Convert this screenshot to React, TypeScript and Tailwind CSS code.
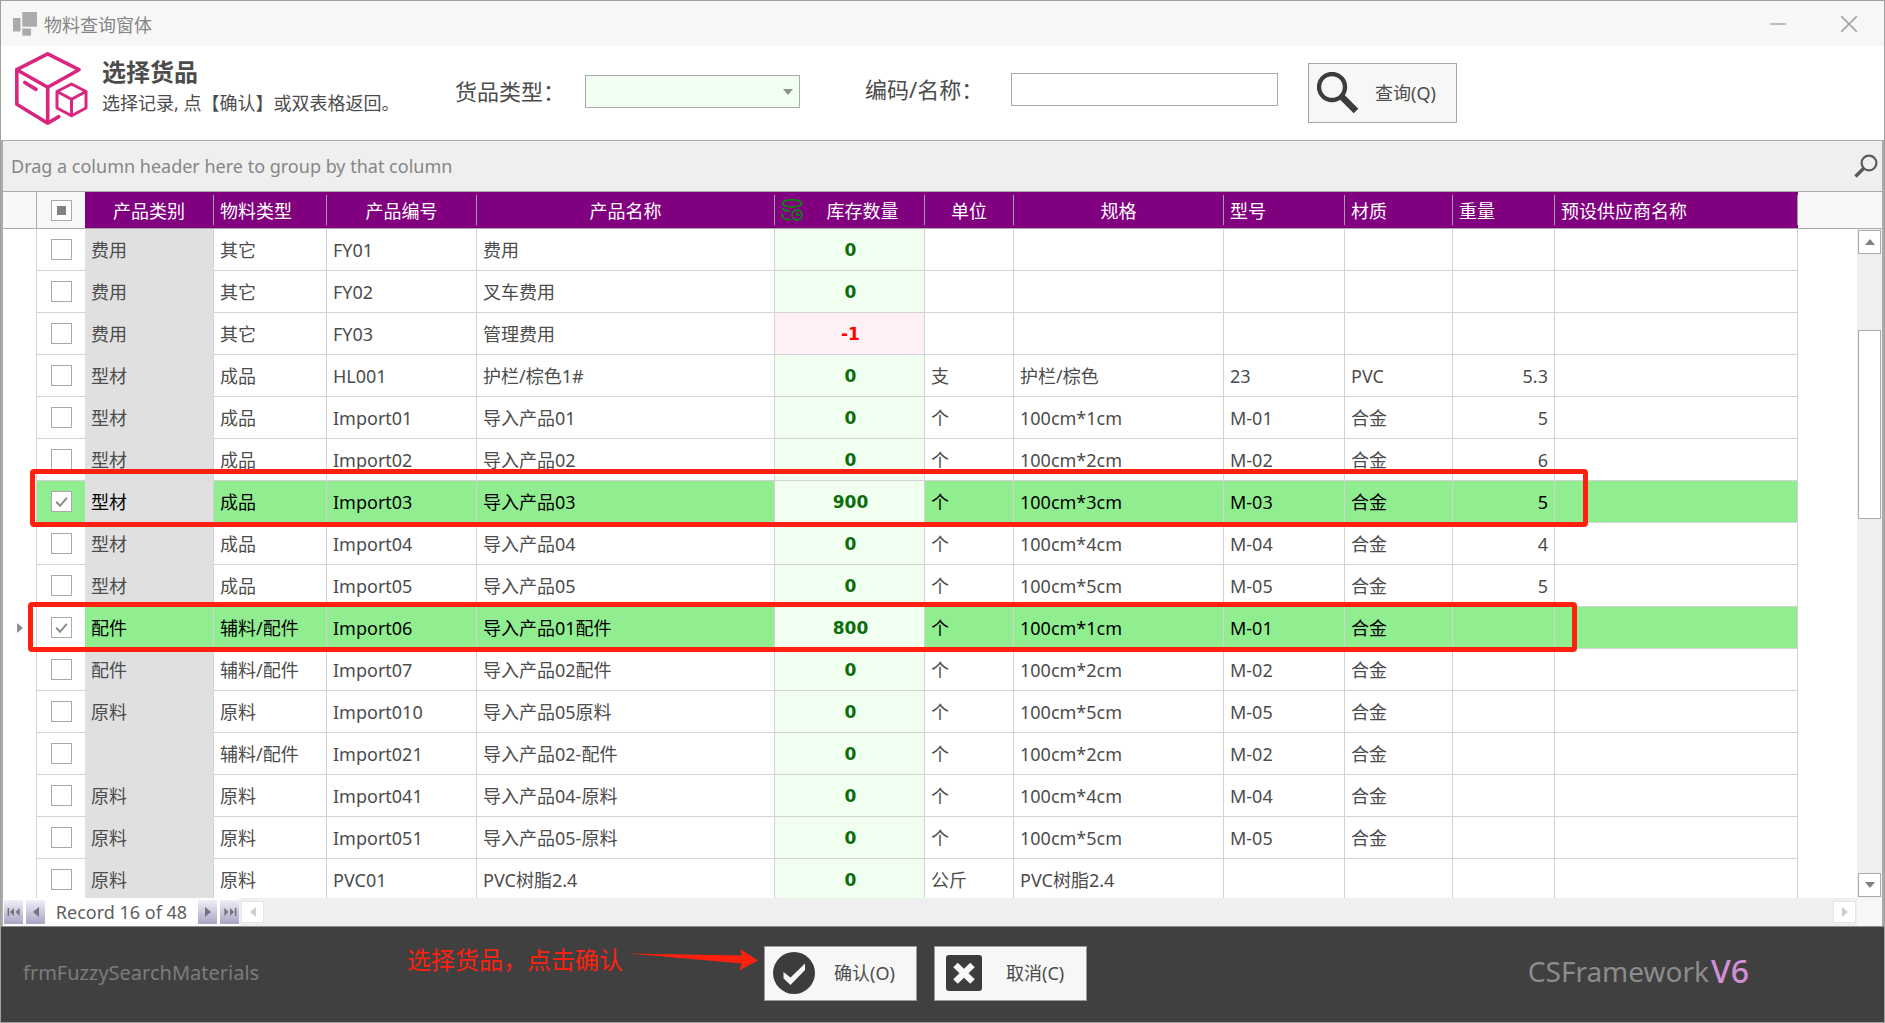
import { useState } from 'react';
import clsx from 'clsx';

interface Material {
  category: string;
  type: string;
  code: string;
  name: string;
  stock: number;
  unit?: string;
  spec?: string;
  model?: string;
  material?: string;
  weight?: string;
}

const materials: Material[] = [
  { category: '费用', type: '其它', code: 'FY01', name: '费用', stock: 0 },
  { category: '费用', type: '其它', code: 'FY02', name: '叉车费用', stock: 0 },
  { category: '费用', type: '其它', code: 'FY03', name: '管理费用', stock: -1 },
  { category: '型材', type: '成品', code: 'HL001', name: '护栏/棕色1#', stock: 0, unit: '支', spec: '护栏/棕色', model: '23', material: 'PVC', weight: '5.3' },
  { category: '型材', type: '成品', code: 'Import01', name: '导入产品01', stock: 0, unit: '个', spec: '100cm*1cm', model: 'M-01', material: '合金', weight: '5' },
  { category: '型材', type: '成品', code: 'Import02', name: '导入产品02', stock: 0, unit: '个', spec: '100cm*2cm', model: 'M-02', material: '合金', weight: '6' },
  { category: '型材', type: '成品', code: 'Import03', name: '导入产品03', stock: 900, unit: '个', spec: '100cm*3cm', model: 'M-03', material: '合金', weight: '5' },
  { category: '型材', type: '成品', code: 'Import04', name: '导入产品04', stock: 0, unit: '个', spec: '100cm*4cm', model: 'M-04', material: '合金', weight: '4' },
  { category: '型材', type: '成品', code: 'Import05', name: '导入产品05', stock: 0, unit: '个', spec: '100cm*5cm', model: 'M-05', material: '合金', weight: '5' },
  { category: '配件', type: '辅料/配件', code: 'Import06', name: '导入产品01配件', stock: 800, unit: '个', spec: '100cm*1cm', model: 'M-01', material: '合金' },
  { category: '配件', type: '辅料/配件', code: 'Import07', name: '导入产品02配件', stock: 0, unit: '个', spec: '100cm*2cm', model: 'M-02', material: '合金' },
  { category: '原料', type: '原料', code: 'Import010', name: '导入产品05原料', stock: 0, unit: '个', spec: '100cm*5cm', model: 'M-05', material: '合金' },
  { category: '', type: '辅料/配件', code: 'Import021', name: '导入产品02-配件', stock: 0, unit: '个', spec: '100cm*2cm', model: 'M-02', material: '合金' },
  { category: '原料', type: '原料', code: 'Import041', name: '导入产品04-原料', stock: 0, unit: '个', spec: '100cm*4cm', model: 'M-04', material: '合金' },
  { category: '原料', type: '原料', code: 'Import051', name: '导入产品05-原料', stock: 0, unit: '个', spec: '100cm*5cm', model: 'M-05', material: '合金' },
  { category: '原料', type: '原料', code: 'PVC01', name: 'PVC树脂2.4', stock: 0, unit: '公斤', spec: 'PVC树脂2.4' },
];

const columns = [
  { title: '产品类别', width: 'w-[129px]', center: true },
  { title: '物料类型', width: 'w-[113px]', center: false },
  { title: '产品编号', width: 'w-[150px]', center: true },
  { title: '产品名称', width: 'w-[298px]', center: true },
  { title: '库存数量', width: 'w-[150px]', center: true },
  { title: '单位', width: 'w-[89px]', center: true },
  { title: '规格', width: 'w-[210px]', center: true },
  { title: '型号', width: 'w-[121px]', center: false },
  { title: '材质', width: 'w-[108px]', center: false },
  { title: '重量', width: 'w-[102px]', center: false },
  { title: '预设供应商名称', width: 'w-[243px]', center: false },
];

function WindowIcon() {
  return (
    <svg className="h-6 w-6" viewBox="0 0 24 24" fill="#ababab">
      <rect x="0" y="6" width="7.5" height="13.5" />
      <rect x="9.3" y="0" width="14.7" height="14.7" />
      <rect x="9.3" y="16.5" width="8.7" height="7.2" />
    </svg>
  );
}

function BoxesIcon() {
  return (
    <svg className="h-[74px] w-[74px]" viewBox="0 0 74 74" fill="none" stroke="#d9267f" strokeLinecap="round" strokeLinejoin="round">
      <g strokeWidth="3.6">
        <path d="M1.8 17.7 32.7 1.8 64 17.7 32.7 35.2Z" />
        <path d="M1.8 17.7V52.3L32.7 71.3 43.8 64.6M32.7 35.2V71.3" />
        <path d="M9.8 30.5 21 37.4" />
      </g>
      <path d="M56.5 32 71 39.5V56L56.5 63.8 42 56V39.5ZM42 39.5 56.5 47.3 71 39.5M56.5 47.3V63.8" strokeWidth="3" />
    </svg>
  );
}

function StockIcon() {
  return (
    <svg className="h-[22px] w-[22px]" viewBox="0 0 22 22" fill="none" stroke="#128012" strokeWidth="1.8">
      <ellipse cx="11" cy="4.4" rx="9.6" ry="3.6" />
      <path d="M1.2 9.2c.8 2 3.6 3 8 3M1.2 14.6v2.2c.4 2.4 4 4 8.6 4.1" />
      <circle cx="16" cy="16" r="5" />
      <path d="M16 12.8v3.4h3" />
    </svg>
  );
}

function Arrow({ direction, className }: { direction: 'up' | 'down' | 'left' | 'right'; className?: string }) {
  const paths = {
    up: 'M0 8 5 2l5 6Z',
    down: 'M0 2 5 8l5-6Z',
    left: 'M8 0 2 5l6 5Z',
    right: 'M2 0 8 5l-6 5Z',
  };
  return (
    <svg className={clsx('h-[10px] w-[10px]', className)} viewBox="0 0 10 10" fill="currentColor">
      <path d={paths[direction]} />
    </svg>
  );
}

function Tick({ checked, onChange, label }: { checked: boolean; onChange: () => void; label: string }) {
  return (
    <span className="mx-auto grid h-[21px] w-[21px]">
      <input
        type="checkbox"
        aria-label={label}
        checked={checked}
        onChange={onChange}
        className="col-start-1 row-start-1 h-[21px] w-[21px] appearance-none border border-[#a9a9a9] bg-white"
      />
      {checked && (
        <svg className="pointer-events-none col-start-1 row-start-1 h-[21px] w-[21px]" viewBox="0 0 21 21" fill="none" stroke="#8c8c8c" strokeWidth="2">
          <path d="m5.2 10.8 3.8 4 6.8-8" />
        </svg>
      )}
    </span>
  );
}

function NavButton({ label, children }: { label: string; children: React.ReactNode }) {
  return (
    <button aria-label={label} className="flex h-6 w-[19px] items-center justify-center bg-linear-to-b from-[#f0f0f6] to-[#a8a5c4] text-[#727280]">
      {children}
    </button>
  );
}

export default function App() {
  const [selected, setSelected] = useState<string[]>(['Import03', 'Import06']);
  const [keyword, setKeyword] = useState('');
  const focused = 'Import06';

  const toggle = (code: string) => {
    setSelected(selected.includes(code) ? selected.filter((c) => c !== code) : [...selected, code]);
  };

  return (
    <div className="flex h-screen flex-col overflow-hidden border border-[#a0a0a0] bg-white font-['Noto_Sans','Noto_Sans_CJK_SC',sans-serif] text-[18px] leading-6 text-[#4c4c4c]">
      <header className="flex h-[45px] shrink-0 items-center bg-[#f7f7f7] pl-3 text-[#858585]">
        <WindowIcon />
        <h1 className="ml-[7px] flex-1 pt-[2px]">物料查询窗体</h1>
        <button aria-label="最小化" className="flex h-full w-[72px] items-center justify-center">
          <svg className="h-4 w-4" viewBox="0 0 16 16" stroke="#a3a3a3" strokeWidth="1.4">
            <path d="M0 8h16" />
          </svg>
        </button>
        <button aria-label="关闭" className="flex h-full w-[70px] items-center justify-center">
          <svg className="h-4 w-4" viewBox="0 0 16 16" stroke="#a3a3a3" strokeWidth="1.6">
            <path d="m0 0 16 16M16 0 0 16" />
          </svg>
        </button>
      </header>

      <section className="flex h-[94px] shrink-0 items-center pl-[14px]">
        <div className="flex w-[440px] items-center pb-2">
          <BoxesIcon />
          <div className="ml-[13px] pb-1">
            <h2 className="text-[24px] leading-8 font-bold">选择货品</h2>
            <p className="leading-[30px]">选择记录, 点【确认】或双表格返回。</p>
          </div>
        </div>
        <div className="flex items-center pb-1">
          <label htmlFor="kind" className="w-[130px] text-[22px] leading-8">货品类型：</label>
          <div className="relative w-[215px]">
            <select id="kind" className="block h-[33px] w-full appearance-none border border-[#ababab] bg-[#f0fff0]">
              <option></option>
            </select>
            <Arrow direction="down" className="pointer-events-none absolute top-[12px] right-[7px] text-[#8a948a]" />
          </div>
        </div>
        <div className="flex items-center pb-2">
          <label htmlFor="keyword" className="ml-[65px] w-[146px] text-[22px] leading-8">编码/名称：</label>
          <input
            id="keyword"
            value={keyword}
            onChange={(e) => setKeyword(e.target.value)}
            className="h-[33px] w-[267px] border border-[#ababab] px-2"
          />
        </div>
        <button className="ml-[30px] flex h-[60px] w-[149px] items-center border border-[#a6a6a6] bg-[#f7f7f7] pl-2">
          <svg className="h-[42px] w-[42px]" viewBox="0 0 42 42" fill="none" stroke="#3c3c3c">
            <circle cx="15" cy="15" r="13" strokeWidth="4.4" />
            <path d="M24.5 24.5 39 39" strokeWidth="6.5" />
          </svg>
          <span className="ml-4">查询(Q)</span>
        </button>
      </section>

      <main className="flex min-h-0 flex-1 flex-col border-x-2 border-t border-[#ababab]">
        <div className="flex h-[50px] shrink-0 items-center justify-between bg-[#efefef] pr-1 pl-2 text-[#868686]">
          <span>Drag a column header here to group by that column</span>
          <button aria-label="查找">
            <svg className="h-6 w-6" viewBox="0 0 24 24" fill="none" stroke="#5a5a5a">
              <circle cx="15" cy="9" r="7.4" strokeWidth="2.2" />
              <path d="M10 14 1.5 22.5" strokeWidth="3.4" />
            </svg>
          </button>
        </div>

        <div className="relative min-h-0 flex-1 overflow-hidden border-t border-[#ababab]">
          <table className="w-full table-fixed border-separate border-spacing-0">
            <thead>
              <tr className="h-[37px] bg-[#f7f7f7]">
                <th className="w-[34px] border-r border-b border-[#ababab]"></th>
                <th className="w-[48px] border-b border-[#ababab] p-0">
                  <span className="mx-auto grid h-[21px] w-[21px] place-items-center">
                    <input
                      type="checkbox"
                      aria-label="全选"
                      className="col-start-1 row-start-1 h-[21px] w-[21px] appearance-none border border-[#a9a9a9] bg-white"
                    />
                    <span className="pointer-events-none col-start-1 row-start-1 h-[9px] w-[9px] bg-[#828282]"></span>
                  </span>
                </th>
                {columns.map((col) => (
                  <th key={col.title} className={clsx('border-b border-[#ababab] bg-[#800080] p-0 font-normal text-white', col.width)}>
                    <div className={clsx('flex h-[30px] items-center border-r border-[#a0a0a0] px-[6px]', col.center && 'justify-center')}>
                      {col.title === '库存数量' && <StockIcon />}
                      <span className={clsx('pt-[2px]', col.title === '库存数量' && 'flex-1 pl-1')}>{col.title}</span>
                    </div>
                  </th>
                ))}
                <th className="border-b border-[#ababab]"></th>
              </tr>
            </thead>
            <tbody>
              {materials.map((row) => {
                const checked = selected.includes(row.code);
                const isFocused = row.code === focused;
                const cell = clsx('truncate border-r border-b border-[#d3d3d3] p-0 px-[6px]', checked && 'bg-[#90ee90] text-black');
                return (
                  <tr key={row.code} className="h-[42px]">
                    <td className="border-r border-[#d3d3d3] p-0">
                      {isFocused && <Arrow direction="right" className="ml-3 text-[#8c8c8c]" />}
                    </td>
                    <td className={clsx('border-b border-[#d3d3d3] p-0', checked && !isFocused && 'bg-[#90ee90]')}>
                      <Tick checked={checked} onChange={() => toggle(row.code)} label={row.name} />
                    </td>
                    <td
                      className={clsx(
                        'border-r border-b border-r-[#d3d3d3] border-b-[#dcdcdc] p-0 px-[6px]',
                        isFocused ? 'bg-[#90ee90]' : 'bg-[#e0e0e0]',
                        checked && 'text-black',
                      )}
                    >
                      {row.category}
                    </td>
                    <td className={cell}>{row.type}</td>
                    <td className={cell}>{row.code}</td>
                    <td className={cell}>{row.name}</td>
                    <td
                      className={clsx(
                        "border-r border-b border-[#d3d3d3] p-0 pl-[2px] text-center font-['DejaVu_Sans',sans-serif] text-[17px] font-bold",
                        row.stock < 0 ? 'bg-[#fff0f5] text-[#ff0000]' : 'bg-[#f0fff0] text-[#0b6e0b]',
                      )}
                    >
                      {row.stock}
                    </td>
                    <td className={cell}>{row.unit}</td>
                    <td className={cell}>{row.spec}</td>
                    <td className={cell}>{row.model}</td>
                    <td className={cell}>{row.material}</td>
                    <td className={clsx(cell, 'text-right')}>{row.weight}</td>
                    <td className={cell}></td>
                    <td></td>
                  </tr>
                );
              })}
            </tbody>
          </table>

          {/* vertical scrollbar */}
          <div className="absolute top-[37px] right-0 bottom-0 flex w-[25px] flex-col items-center bg-[#efefef] py-[1px]">
            <button aria-label="向上" className="flex h-6 w-[23px] items-center justify-center border border-[#ababab] bg-white text-[#808080]">
              <Arrow direction="up" />
            </button>
            <div className="mt-[76px] h-[189px] w-[23px] border border-[#ababab] bg-white"></div>
            <button aria-label="向下" className="mt-auto flex h-6 w-[23px] items-center justify-center border border-[#ababab] bg-white text-[#808080]">
              <Arrow direction="down" />
            </button>
          </div>

          {/* highlight frames around the picked rows */}
          <div className="pointer-events-none absolute top-[277px] left-[27px] h-[58px] w-[1558px] rounded-[4px] border-[5px] border-[#ff2010]"></div>
          <div className="pointer-events-none absolute top-[410px] left-[25px] h-[50px] w-[1549px] rounded-[4px] border-[5px] border-[#ff2010]"></div>
        </div>

        <div className="flex h-7 shrink-0 items-center bg-[#efefef]">
          <div className="flex h-full w-[236px] items-center gap-[3px] bg-white pl-[1px]">
            <NavButton label="第一条">
              <svg className="h-[8px] w-4" viewBox="0 0 16 10" fill="currentColor">
                <path d="M0 0h2v10H0zM8 0v10L3 5zM15 0v10l-5-5z" />
              </svg>
            </NavButton>
            <NavButton label="上一条">
              <Arrow direction="left" />
            </NavButton>
            <span className="flex-1 text-center whitespace-nowrap text-[#606060]">Record 16 of 48</span>
            <NavButton label="下一条">
              <Arrow direction="right" />
            </NavButton>
            <NavButton label="最后一条">
              <svg className="h-[8px] w-4" viewBox="0 0 16 10" fill="currentColor">
                <path d="M14 0h2v10h-2zM8 0v10l5-5zM1 0v10l5-5z" />
              </svg>
            </NavButton>
          </div>
          <button aria-label="向左" className="ml-[2px] flex h-[22px] w-[23px] items-center justify-center border border-[#e6e6e6] bg-white text-[#cfcfcf]">
            <Arrow direction="left" />
          </button>
          <button aria-label="向右" className="mr-[1px] ml-auto flex h-[22px] w-[23px] items-center justify-center border border-[#e6e6e6] bg-white text-[#cfcfcf]">
            <Arrow direction="right" />
          </button>
          <div className="h-full w-[25px] bg-[#f7f7f7]"></div>
        </div>
      </main>

      <footer className="flex h-[96px] shrink-0 items-center border-t border-[#8c8c8c] bg-[#404040] pb-[3px] pl-[22px]">
        <span className="w-[384px] text-[20px] text-[#7c7c7c]">frmFuzzySearchMaterials</span>
        <div className="flex w-[357px] items-center pb-[26px] text-[24px] leading-8 text-[#ff2010]">
          <span>选择货品，点击确认</span>
          <svg className="ml-[6px] h-[22px] w-[129px]" viewBox="0 0 129 22" fill="#ff2010">
            <path d="M0 4.5 113 6.5 111 0 129 11.5 110 21.5 113 14.5Z" />
          </svg>
        </div>
        <button className="flex h-[55px] w-[153px] items-center border border-[#9a9a9a] bg-[#f7f7f7] pl-2">
          <svg className="h-[42px] w-[42px]" viewBox="0 0 42 42">
            <circle cx="21" cy="21" r="21" fill="#3c3c3c" />
            <path d="M10.5 20v6.5L17.5 33 32 18V11.5L17.5 25.5Z" fill="#f7f7f7" />
          </svg>
          <span className="ml-[19px]">确认(O)</span>
        </button>
        <button className="ml-[17px] flex h-[55px] w-[153px] items-center border border-[#9a9a9a] bg-[#f7f7f7] pl-[11px]">
          <svg className="h-9 w-9" viewBox="0 0 36 36">
            <rect width="36" height="36" rx="3" fill="#3c3c3c" />
            <path d="m9.5 10 17 16.5M26.5 10l-17 16.5" stroke="#f7f7f7" strokeWidth="6.5" />
          </svg>
          <span className="ml-6">取消(C)</span>
        </button>
        <div className="mr-[135px] ml-auto flex items-center gap-[2px] pb-1">
          <span className="text-[28px] leading-8 text-[#8c8c8c]">CSFramework</span>
          <span className="text-[32px] leading-8 font-medium text-[#d48fd4]">V6</span>
        </div>
      </footer>
    </div>
  );
}
